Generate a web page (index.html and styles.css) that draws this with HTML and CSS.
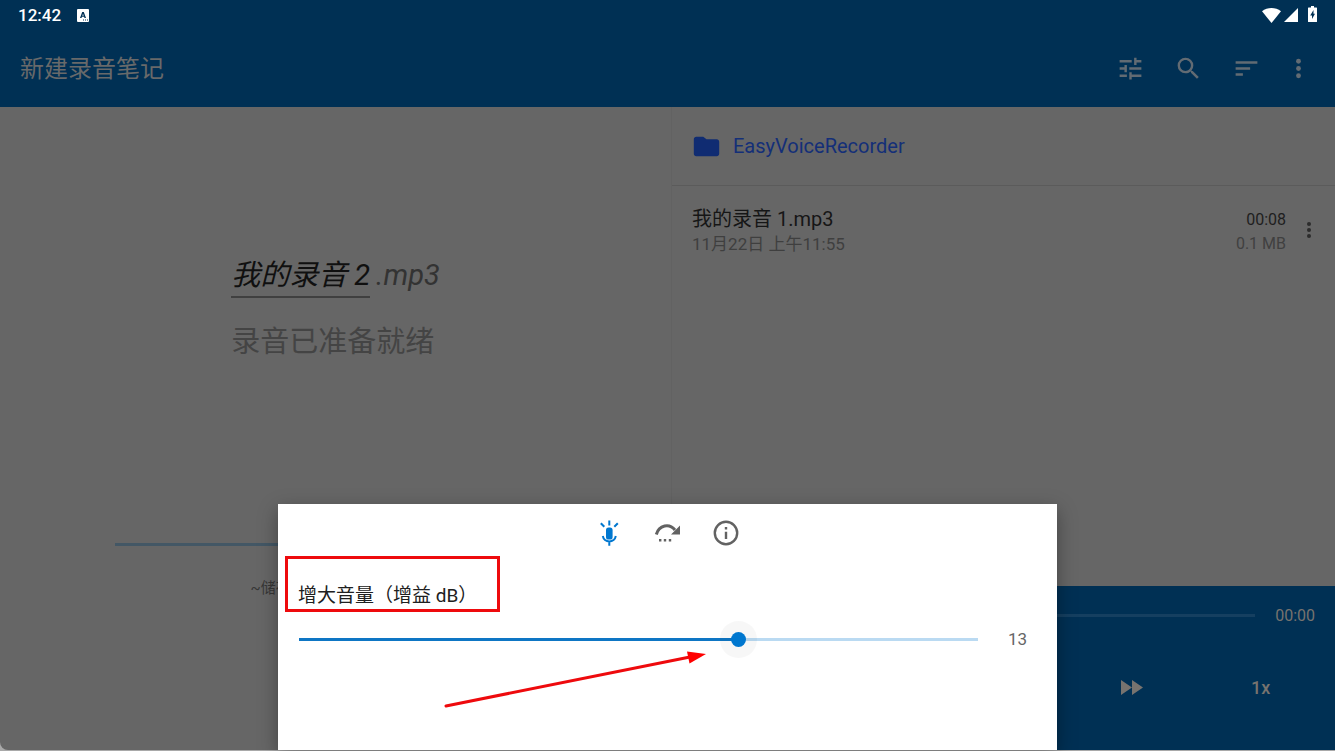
FILE: index.html
```html
<!DOCTYPE html>
<html lang="zh-CN">
<head>
<meta charset="utf-8">
<meta name="viewport" content="width=device-width, initial-scale=1">
<title>新建录音笔记</title>
<link rel="stylesheet" href="styles.css">
</head>
<body>
<div class="app">
  <header class="header">
    <div class="statusbar">
      <span class="clock">12:42</span>
      <svg class="status-app" viewBox="0 0 12 13" aria-hidden="true"><path fill="#fff" fill-rule="evenodd" d="M1 0h10a1 1 0 0 1 1 1v11a1 1 0 0 1-1 1H1a1 1 0 0 1-1-1V1a1 1 0 0 1 1-1zM5.200 3 3 9h1.500l.4-1.200h2.200l.4 1.200H9L6.800 3zM6 4.800l.7 1.900H5.300zM6 10.500v1h1v-1zM8 10.500v1h1v-1zM10 10.500v1h1v-1z"/></svg>
      <div class="status-icons">
        <svg width="19" height="15" viewBox="0 0 19 15" aria-hidden="true"><path fill="#fff" d="M0 3.300C5.500-1.100 13.500-1.100 19 3.300L9.500 15z"/></svg>
        <svg width="14" height="14" viewBox="0 0 14 14" aria-hidden="true"><path fill="#fff" d="M14 0v14H0z"/></svg>
        <svg class="battery" width="9" height="16" viewBox="0 0 9 16" aria-hidden="true"><path fill="#fff" fill-rule="evenodd" d="M3 0h3v1.500H8.500a.5.5 0 0 1 .5.5v13.500a.5.5 0 0 1-.5.5h-8a.5.5 0 0 1-.5-.5V2a.5.5 0 0 1 .5-.5h2.500zM5.500 4 2.200 9.500H4V13l3-5.300H5.500z"/></svg>
      </div>
    </div>
    <div class="toolbar">
      <h1 class="title">新建录音笔记</h1>
      <button class="tool" type="button" aria-label="调整"><svg class="icon" viewBox="0 0 24 24"><path d="M3 17v2h6v-2H3zM3 5v2h10V5H3zm10 16v-2h8v-2h-8v-2h-2v6h2zM7 9v2H3v2h4v2h2V9H7zm14 4v-2H11v2h10zm-6-4h2V7h4V5h-4V3h-2v6z"/></svg></button>
      <button class="tool" type="button" aria-label="搜索"><svg class="icon" viewBox="0 0 24 24"><path d="M15.500 14h-.79l-.28-.27A6.470 6.470 0 0 0 16 9.500 6.500 6.500 0 1 0 9.500 16c1.610 0 3.090-.59 4.230-1.570l.27.28v.79l5 4.990L20.490 19l-4.990-5zm-6 0C7.010 14 5 11.990 5 9.500S7.010 5 9.500 5 14 7.010 14 9.500 11.990 14 9.500 14z"/></svg></button>
      <button class="tool" type="button" aria-label="排序"><svg class="icon" viewBox="0 0 24 24"><path d="M3 18h6v-2H3v2zM3 6v2h18V6H3zm0 7h12v-2H3v2z"/></svg></button>
      <button class="tool tool-more" type="button" aria-label="更多"><svg class="icon" viewBox="0 0 24 24"><circle cx="12" cy="6" r="2"/><circle cx="12" cy="12" r="2"/><circle cx="12" cy="18" r="2"/></svg></button>
    </div>
  </header>

  <main class="main">
    <section class="recorder">
      <div class="recording">
        <p class="filename"><span class="basename">我的录音 2</span><span class="ext">.mp3</span></p>
        <p class="state">录音已准备就绪</p>
      </div>
      <div class="level"></div>
      <p class="storage">~储存</p>
    </section>

    <section class="library">
      <a class="folder" href="#">
        <svg class="icon folder-icon" viewBox="0 0 24 24"><path d="M9.300 4H3.500C2.400 4 1.500 4.900 1.500 6v12c0 1.100.9 2 2 2h17c1.100 0 2-.9 2-2V8c0-1.100-.9-2-2-2H12z"/></svg>
        EasyVoiceRecorder
      </a>
      <div class="track">
        <div class="track-info">
          <p class="track-name">我的录音 1.mp3</p>
          <p class="track-date">11月22日 上午11:55</p>
        </div>
        <div class="track-meta">
          <p class="track-length">00:08</p>
          <p class="track-size">0.1 MB</p>
        </div>
        <button class="track-more" type="button" aria-label="更多"><svg class="icon" viewBox="0 0 24 24"><circle cx="12" cy="6" r="2"/><circle cx="12" cy="12" r="2"/><circle cx="12" cy="18" r="2"/></svg></button>
      </div>
      <div class="player">
        <div class="seek-row">
          <input class="seek" type="range" min="0" max="8" value="0" aria-label="播放进度">
          <span class="time">00:00</span>
        </div>
        <div class="controls">
          <button class="control forward" type="button" aria-label="快进"><svg width="22" height="15" viewBox="0 0 22 15"><path d="M0 0v15l11-7.500zM11 0v15l11-7.500z"/></svg></button>
          <button class="control speed" type="button">1x</button>
        </div>
      </div>
    </section>
  </main>
</div>

<div class="sheet" role="dialog" aria-labelledby="gain-label">
  <div class="tabs">
    <button class="tab tab-active" type="button" aria-label="增益">
      <svg width="28" height="28" viewBox="0 0 28 28"><rect x="10" y="8.500" width="6.600" height="12" rx="2.600" fill="currentColor"/><g fill="none" stroke="currentColor" stroke-width="2"><path d="M13.300 1.500v5M4.800 4.200l3.500 3.600M21.800 4.200l-3.500 3.600M6.800 17a6.600 6.600 0 0 0 13 0M13.300 22v4.800"/></g></svg>
    </button>
    <button class="tab" type="button" aria-label="跳过静音">
      <svg width="28" height="28" viewBox="0 0 28 28"><path d="M2.300 15.500C5 5.800 15.500 4 21 11" fill="none" stroke="currentColor" stroke-width="3"/><path fill="currentColor" d="M26 6.500V15.500h-9zM5 20h2.400v2.400H5zM9.800 20h2.400v2.400H9.800zM14.800 20h2.400v2.400h-2.400z"/></svg>
    </button>
    <button class="tab" type="button" aria-label="信息">
      <svg width="28" height="28" viewBox="0 0 28 28"><circle cx="14" cy="14" r="11.200" fill="none" stroke="currentColor" stroke-width="2.400"/><path fill="currentColor" d="M12.800 8h2.400v2.400h-2.400zM12.800 12.800h2.400v7.200h-2.400z"/></svg>
    </button>
  </div>
  <label class="gain-label" id="gain-label" for="gain">增大音量（增益 dB）</label>
  <div class="gain-row">
    <input class="gain" id="gain" type="range" min="0" max="20" value="13" style="--fill: 65%">
    <output class="gain-value" for="gain">13</output>
  </div>
  <div class="highlight"></div>
  <svg class="arrow" width="264" height="60" viewBox="0 0 264 60" aria-hidden="true"><path d="M2 56 246 7" stroke="#ee0a0d" stroke-width="3" stroke-linecap="round"/><path fill="#f00" d="M243 1.500 262 4 245.500 13.500z"/></svg>
</div>
</body>
</html>
```
FILE: styles.css
```css
:root {
  --navy: #003054;
  --surface: #666666;
  --muted: #626b73;
  --blue: #0077cf;
}

* { box-sizing: border-box; }

body {
  margin: 0;
  background: #a9a9a9;
  font-family: Roboto, "Noto Sans CJK SC", sans-serif;
  overflow: hidden;
}

h1, p { margin: 0; font-weight: 400; }

button {
  display: flex;
  align-items: center;
  justify-content: center;
  padding: 0;
  border: 0;
  background: none;
  color: inherit;
  font: inherit;
}

.icon {
  width: 29px;
  height: 29px;
  fill: currentColor;
}

.app {
  display: flex;
  flex-direction: column;
  height: calc(100vh - 1px);
  border-radius: 0 0 0 8px;
  background: var(--surface);
  overflow: hidden;
}

.header { background: var(--navy); }

.statusbar {
  display: flex;
  align-items: center;
  height: 30px;
  padding: 0 18px;
  color: #fff;
}

.clock { font-size: 17px; font-weight: 500; line-height: 30px; }
.status-app { width: 12px; height: 13px; margin-left: 16px; }

.status-icons {
  display: flex;
  align-items: center;
  gap: 3px;
  margin-left: auto;
}

.battery { margin: 0 0 2px 7px; }

.toolbar {
  display: flex;
  align-items: center;
  height: 77px;
  padding: 0 14px 0 20px;
  color: var(--muted);
}

.title { flex: 1; font-size: 24px; line-height: 36px; color: #68696a; }
.tool { width: 58px; height: 58px; }
.tool-more { width: 46px; }

.main {
  display: grid;
  grid-template-columns: 671fr 664fr;
  flex: 1;
  min-height: 0;
}

.recorder {
  display: flex;
  flex-direction: column;
  align-items: center;
  padding-top: 147px;
}

.filename {
  display: flex;
  gap: 6px;
  font-size: 29px;
  font-style: italic;
  line-height: 42px;
  color: #333;
}

.basename { border-bottom: 2px solid #404040; color: #101010; }
.state { margin-top: 22px; font-size: 29px; line-height: 44px; color: #444; }

.level {
  width: calc(100% - 230px);
  height: 3px;
  margin-top: 179px;
  background: #435765;
}

.storage {
  width: 170px;
  margin-top: 31px;
  font-size: 15px;
  line-height: 22px;
  color: #363636;
}

.library {
  display: flex;
  flex-direction: column;
  border-left: 1px solid #626262;
}

.folder {
  display: flex;
  align-items: center;
  gap: 12px;
  height: 79px;
  padding-left: 20px;
  border-bottom: 1px solid #5b5b5b;
  color: #142f78;
  font-size: 20px;
  text-decoration: none;
}

.folder-icon { color: #102c72; }

.track {
  display: flex;
  align-items: center;
  height: 88px;
  padding: 0 10px 0 20px;
}

.track-info { flex: 1; padding-top: 1px; }
.track-name { font-size: 20px; line-height: 26px; color: #161616; }
.track-date { font-size: 17px; line-height: 24px; color: #3f3f3f; }
.track-meta { padding-top: 4px; font-size: 16px; line-height: 24px; text-align: right; color: #404040; }
.track-length { color: #1e1e1e; }
.track-more { width: 32px; height: 40px; margin-left: 7px; color: #2c2c2c; }
.track-more .icon { width: 24px; height: 24px; }

.player {
  height: 164px;
  margin-top: auto;
  padding: 17px 10px 0;
  background: var(--navy);
  color: #77736f;
}

.seek-row {
  display: flex;
  align-items: center;
  gap: 20px;
  height: 24px;
  padding: 0 10px;
  font-size: 16px;
}

.seek, .gain {
  appearance: none;
  flex: 1;
  min-width: 0;
  height: 16px;
  margin: 0;
  background: none;
}

.seek::-webkit-slider-runnable-track { height: 3px; background: #153f60; }
.seek::-webkit-slider-thumb { appearance: none; width: 1px; height: 3px; }

.controls {
  display: grid;
  grid-template-columns: repeat(5, 1fr);
  margin-top: 36px;
}

.control { height: 48px; font-size: 18px; font-weight: 500; }
.control svg { fill: currentColor; }
.forward { grid-column: 4; }
.speed { grid-column: 5; }

.sheet {
  position: absolute;
  right: 0;
  bottom: 1px;
  left: 0;
  max-width: 779px;
  height: 246px;
  margin: 0 auto;
  padding: 10px 20px 0;
  background: #fff;
  box-shadow: 0 6px 18px rgba(0, 0, 0, 0.35);
}

.tabs {
  display: flex;
  justify-content: center;
  color: #626262;
}

.tab { width: 58px; height: 38px; }
.tab-active { color: var(--blue); }

.gain-label {
  display: block;
  margin-top: 29px;
  font-size: 19px;
  line-height: 30px;
  color: #202020;
}

.gain-row {
  display: flex;
  align-items: center;
  gap: 30px;
  height: 30px;
  margin-top: 13px;
  padding: 0 10px 0 1px;
}

.gain::-webkit-slider-runnable-track {
  height: 3px;
  background: linear-gradient(to right, #0e76c4 var(--fill), #badaf2 var(--fill));
}

.gain::-webkit-slider-thumb {
  appearance: none;
  width: 15px;
  height: 15px;
  margin-top: -6px;
  border-radius: 50%;
  background: var(--blue);
  box-shadow: 0 0 0 11px rgba(0, 0, 0, 0.03);
}

.gain-value { font-size: 17px; color: #666; }

.highlight {
  position: absolute;
  top: 52px;
  left: 7px;
  width: 215px;
  height: 56px;
  border: 3px solid #ee0a0d;
}

.arrow {
  position: absolute;
  top: 146px;
  left: 166px;
}
```
